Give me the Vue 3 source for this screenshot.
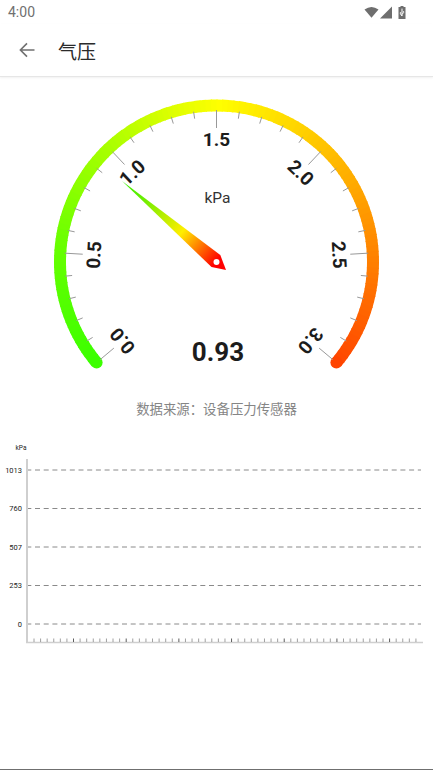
<script setup>
const cx = 216.5
const cy = 262
const rad = (d) => (d * Math.PI) / 180
const pt = (r, d) => [cx + r * Math.cos(rad(d)), cy + r * Math.sin(rad(d))]
const f = (n) => n.toFixed(2)

const stops = [
  [0, 106],
  [0.167, 96],
  [0.333, 80],
  [0.5, 60],
  [1, 16],
]
const hueAt = (t) => {
  for (let i = 1; i < stops.length; i++) {
    if (t <= stops[i][0]) {
      const [t0, h0] = stops[i - 1]
      const [t1, h1] = stops[i]
      return h0 + ((t - t0) / (t1 - t0)) * (h1 - h0)
    }
  }
  return 16
}

const segments = Array.from({ length: 130 }, (_, i) => {
  const t = i / 130
  const a = 140 + 260 * t
  const b = a + 2.4
  const p = pt(156.5, a)
  const q = pt(156.5, Math.min(b, 400))
  return {
    d: `M${f(p[0])} ${f(p[1])}A156.5 156.5 0 0 1 ${f(q[0])} ${f(q[1])}`,
    color: `hsl(${hueAt(t)},100%,50%)`,
  }
})
const capStart = pt(156.5, 140)
const capEnd = pt(156.5, 400)

const ticks = Array.from({ length: 31 }, (_, i) => {
  const a = 140 + (260 * i) / 30
  const major = i % 5 === 0
  const p = pt(152, a)
  const q = pt(major ? 134 : 145, a)
  return { x1: f(p[0]), y1: f(p[1]), x2: f(q[0]), y2: f(q[1]) }
})

const labels = ['0.0', '0.5', '1.0', '1.5', '2.0', '2.5', '3.0'].map((text, i) => {
  const a = 140 + (260 * i) / 6
  const p = pt(122, a)
  return { text, transform: `translate(${f(p[0])} ${f(p[1])}) rotate(${f(a - 270)})` }
})

const grid = [
  { y: 470, label: '1013' },
  { y: 508.5, label: '760' },
  { y: 547, label: '507' },
  { y: 585.5, label: '253' },
  { y: 624, label: '0' },
].map((g) => ({ y: g.y - 436, label: g.label }))

const xTicks = Array.from({ length: 59 }, (_, i) => ({
  x: f(34 + i * 6.585),
  dark: i % 8 === 6,
}))
</script>

<template>
  <div class="page">
    <div class="status">
      <span class="time">4:00</span>
      <div class="status-icons">
        <svg width="15" height="12" viewBox="0 0 15 12">
          <path d="M0.5 3.6Q7.5 -1.8 14.5 3.6L7.5 11.8Z" fill="#6e6e6e" />
        </svg>
        <svg width="13" height="13" viewBox="0 0 13 13">
          <path d="M12 0.5V12.5H0Z" fill="#6e6e6e" />
        </svg>
        <svg class="battery" width="8" height="13" viewBox="0 0 8 13">
          <path d="M2.5 0H5.5V1H7.5V13H0.5V1H2.5Z" fill="#6e6e6e" />
          <path d="M4 2.6V10M4 10L2.4 7.8V6.2M4 8.4L5.6 6.6V5.2" stroke="#fff" stroke-width="1" fill="none" />
        </svg>
      </div>
    </div>

    <header class="toolbar">
      <svg class="back" width="16" height="16" viewBox="0 0 16 16">
        <path d="M15.5 8H1.6M8 1.4L1.4 8L8 14.6" stroke="#707070" stroke-width="1.6" fill="none" />
      </svg>
      <h1 class="title">气压</h1>
    </header>

    <svg class="gauge" width="433" height="312" viewBox="0 78 433 312">
      <path v-for="(s, i) in segments" :key="i" :d="s.d" :stroke="s.color" stroke-width="12" fill="none" />
      <circle :cx="capStart[0]" :cy="capStart[1]" r="6" fill="hsl(106,100%,50%)" />
      <circle :cx="capEnd[0]" :cy="capEnd[1]" r="6" fill="hsl(16,100%,50%)" />

      <line
        v-for="(t, i) in ticks"
        :key="'t' + i"
        :x1="t.x1"
        :y1="t.y1"
        :x2="t.x2"
        :y2="t.y2"
        stroke="#999"
        stroke-width="1"
      />

      <text
        v-for="l in labels"
        :key="l.text"
        :transform="l.transform"
        class="tick-label"
        text-anchor="middle"
        y="-0.7"
        dominant-baseline="central"
      >{{ l.text }}</text>

      <text x="217.5" y="202.5" class="unit" text-anchor="middle">kPa</text>

      <defs>
        <linearGradient id="needle" gradientUnits="userSpaceOnUse" x1="122" y1="181" x2="222" y2="266">
          <stop offset="0" stop-color="#33ee00" />
          <stop offset="0.2" stop-color="#66ee00" />
          <stop offset="0.6" stop-color="#ffee00" />
          <stop offset="0.95" stop-color="#ff0000" />
          <stop offset="1" stop-color="#ff0000" />
        </linearGradient>
      </defs>
      <path d="M122 181L220.3 255L226 270L211.5 267Z" fill="url(#needle)" />
      <circle cx="216.5" cy="262" r="3" fill="#fff" />

      <text x="218" y="360.5" class="value" text-anchor="middle">0.93</text>
    </svg>

    <p class="source">数据来源&#xFF1A;设备压力传感器</p>

    <svg class="chart" width="433" height="215" viewBox="0 0 433 215">
      <text x="21" y="14" class="chart-unit" text-anchor="middle">kPa</text>
      <g v-for="g in grid" :key="g.label">
        <text x="22" :y="g.y + 2.8" class="chart-label" text-anchor="end">{{ g.label }}</text>
        <line x1="28" x2="421" :y1="g.y" :y2="g.y" stroke="#8a8a8a" stroke-width="1" stroke-dasharray="5 3.7" stroke-dashoffset="-7" />
      </g>
      <line x1="27" x2="27" y1="23" y2="207" stroke="#cfcfcf" stroke-width="2" />
      <line x1="26" x2="423" y1="206.5" y2="206.5" stroke="#cfcfcf" stroke-width="1.5" />
      <line
        v-for="(t, i) in xTicks"
        :key="'x' + i"
        :x1="t.x"
        :x2="t.x"
        y1="202.5"
        y2="206"
        :stroke="t.dark ? '#333' : '#888'"
        stroke-width="0.8"
      />
    </svg>

    <div class="spacer"></div>
  </div>
</template>

<style>
html,
body {
  margin: 0;
  background: #fff;
}
</style>

<style scoped>
.page {
  width: 433px;
  height: 770px;
  display: flex;
  flex-direction: column;
  box-sizing: border-box;
  background: #fff;
  border-bottom: 1px solid #6f6f6f;
  overflow: hidden;
  font-family: Roboto, "Noto Sans CJK SC", sans-serif;
}
.status {
  height: 24px;
  flex: none;
  display: flex;
  align-items: center;
  justify-content: space-between;
  padding: 0 27px 0 8px;
}
.time {
  font-size: 14px;
  color: #707070;
}
.status-icons {
  display: flex;
  align-items: center;
  gap: 1.5px;
}
.battery {
  margin-left: 3.5px;
}
.toolbar {
  height: 53px;
  flex: none;
  display: flex;
  align-items: center;
  box-sizing: border-box;
  padding-left: 19px;
  border-bottom: 1px solid #e6e6e6;
  box-shadow: 0 1px 2px rgba(0, 0, 0, 0.06);
}
.title {
  margin: 0 0 0 23px;
  font-size: 19px;
  font-weight: 400;
  color: #2a2a2a;
  font-family: "Noto Sans CJK SC", sans-serif;
}
.gauge {
  flex: none;
  display: block;
  margin-top: 1px;
}
.tick-label {
  font-size: 19px;
  font-weight: 700;
  fill: #1c1c1c;
}
.unit {
  font-size: 15.5px;
  fill: #333;
}
.value {
  font-size: 26px;
  font-weight: 700;
  fill: #1c1c1c;
}
.source {
  margin: 9px 0 0;
  height: 19px;
  line-height: 19px;
  text-align: center;
  font-size: 13.4px;
  color: #858585;
  font-family: "Noto Sans CJK SC", sans-serif;
  flex: none;
}
.chart {
  flex: none;
  display: block;
  margin-top: 18px;
}
.chart-unit {
  font-size: 6.5px;
  fill: #222;
}
.chart-label {
  font-size: 7.5px;
  fill: #222;
}
.spacer {
  flex: 1;
}
</style>
